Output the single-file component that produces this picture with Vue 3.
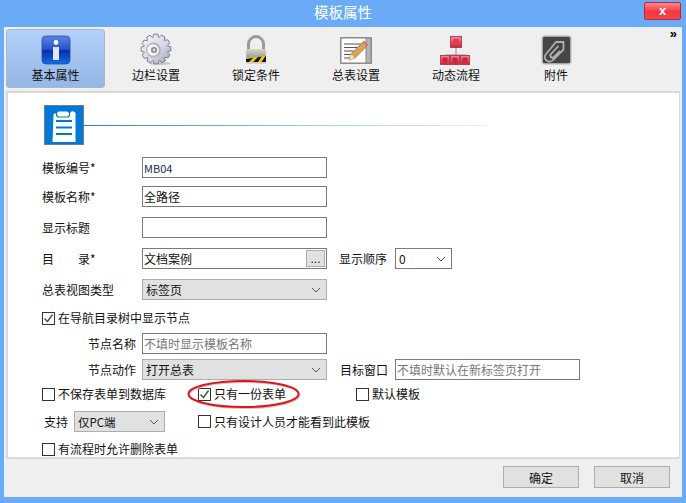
<script setup>
const tabs = [
  { key: 'info', label: '基本属性', active: true },
  { key: 'gear', label: '边栏设置' },
  { key: 'lock', label: '锁定条件' },
  { key: 'sheet', label: '总表设置' },
  { key: 'flow', label: '动态流程' },
  { key: 'clip', label: '附件' },
]
function gearPath(cx, cy, ro, ri, n) {
  const pts = []
  const step = (Math.PI * 2) / n
  for (let i = 0; i < n; i++) {
    const a = i * step
    const seq = [[-0.5, ri], [-0.28, ro], [0.22, ro], [0.44, ri]]
    for (const [o, r] of seq) {
      const t = a + o * step
      pts.push(`${(cx + r * Math.cos(t)).toFixed(2)} ${(cy + r * Math.sin(t)).toFixed(2)}`)
    }
  }
  return 'M' + pts.join('L') + 'Z'
}
const gear = gearPath(18, 14, 15, 12, 12)
</script>

<template>
  <div class="window">
    <header class="titlebar">
      <span></span>
      <span class="title">模板属性</span>
      <button class="close" type="button">x</button>
    </header>
    <div class="client">
      <nav class="toolbar">
        <div v-for="t in tabs" :key="t.key" class="tab" :class="{ active: t.active }">
          <svg class="ico" width="36" height="32" viewBox="0 0 36 32">
            <defs>
              <linearGradient id="infoG" x1="0" y1="0" x2="0" y2="1">
                <stop offset="0" stop-color="#5c86e6" />
                <stop offset=".48" stop-color="#2a50c8" />
                <stop offset=".52" stop-color="#0a2cb0" />
                <stop offset="1" stop-color="#0f6fe6" />
              </linearGradient>
              <linearGradient id="gearG" x1="0" y1="0" x2="1" y2="1">
                <stop offset="0" stop-color="#f6f6fc" />
                <stop offset=".55" stop-color="#d8d9e6" />
                <stop offset="1" stop-color="#9a9bb2" />
              </linearGradient>
              <linearGradient id="lockG" x1="0" y1="0" x2="0" y2="1">
                <stop offset="0" stop-color="#d8d8c8" />
                <stop offset=".5" stop-color="#a8a89c" />
                <stop offset="1" stop-color="#d8d8d0" />
              </linearGradient>
              <linearGradient id="redG" x1="0" y1="0" x2="0" y2="1">
                <stop offset="0" stop-color="#f0909c" />
                <stop offset="1" stop-color="#c81e3c" />
              </linearGradient>
            </defs>
            <g v-if="t.key === 'info'">
              <rect x="4" y="1" width="28" height="28" rx="4" fill="url(#infoG)" stroke="#2a4a9a" stroke-width=".8" />
              <circle cx="18" cy="7.500" r="2.400" fill="#fff" />
              <path d="M15 12h6v13h-6z" fill="#dfe6f2" />
            </g>
            <g v-else-if="t.key === 'gear'">
              <ellipse cx="22" cy="28.500" rx="11" ry="1.500" fill="#c4c4c4" />
              <path :d="gear" fill="url(#gearG)" stroke="#7c7d98" stroke-width="1" stroke-linejoin="round" />
              <circle cx="15.500" cy="15" r="7.500" fill="#b4b4c0" />
              <circle cx="15" cy="15" r="5.800" fill="#f6f6f6" />
              <circle cx="16" cy="15" r="3" fill="#84848c" />
              <circle cx="16" cy="15" r="1.400" fill="#e4e4e4" />
            </g>
            <g v-else-if="t.key === 'lock'">
              <path d="M10.500 14V9a7.500 7.500 0 0 1 15 0v5" fill="none" stroke="#9a9a9a" stroke-width="3" />
              <rect x="8" y="14" width="20" height="15" rx="1.500" fill="url(#lockG)" />
              <path d="M8 24l20-3v6H8z" fill="#141414" />
              <path d="M11 27l5-5h4l-5 5zM20 27l4-6h3.500l-4 6z" fill="#e8c81e" />
            </g>
            <g v-else-if="t.key === 'sheet'">
              <rect x="2" y="2" width="32" height="27" fill="#8b8b8b" rx="1" />
              <rect x="3.500" y="3.500" width="24" height="24" fill="#fbfbfb" />
              <rect x="28.500" y="3.500" width="4" height="24" fill="#b4b4b4" />
              <path d="M6 9h18M6 12.500h16M6 16h12M6 19.500h9M6 23h7" stroke="#555" stroke-width="1" />
              <path d="M11 25l2-6L26 6l4 4-13 13z" fill="#d9a35a" stroke="#8a6a3a" stroke-width=".6" />
              <path d="M11 25l2-6 4 4z" fill="#f3dcb4" />
              <path d="M24.500 7.500l1.500-1.500 4 4-1.500 1.500z" fill="#d8708c" />
            </g>
            <g v-else-if="t.key === 'flow'">
              <path d="M18 12v10M8 24v-4h20v4" fill="none" stroke="#8c8c8c" stroke-width="1" />
              <rect x="12.500" y="1.500" width="11" height="11" fill="url(#redG)" stroke="#b8404c" />
              <rect x="15" y="4" width="6" height="6" fill="#e23a52" />
              <g v-for="x in [2.500, 12.500, 22.500]" :key="x">
                <rect :x="x" y="20.500" width="9" height="9" fill="url(#redG)" stroke="#b8404c" />
                <rect :x="x + 2" y="22.500" width="5" height="5" fill="#d8203c" />
              </g>
            </g>
            <g v-else>
              <rect x="4" y="1" width="29" height="28" rx="2.500" fill="#454545" stroke="#c8c8c8" stroke-width="1.500" />
              <path d="M18 7h7.500v7.500L15 25a4.500 4.500 0 0 1-7-6zM20.500 11L13 19a2 2 0 0 0 3 3l6-6" fill="none" stroke="#b0b0b0" stroke-width="1.800" stroke-linejoin="round" />
            </g>
          </svg>
          <span class="tab-label">{{ t.label }}</span>
        </div>
        <span class="more">»</span>
      </nav>

      <main class="panel">
        <div class="head">
          <div class="head-icon">
            <svg width="38" height="38" viewBox="0 0 38 38">
              <path d="M10 9a1.500 1.500 0 0 1 1.500-1.500H15V7h10v.5h1.500A1.500 1.500 0 0 1 32 9v27H9z" transform="translate(-1.500 0)" fill="#fff" />
              <rect x="11.500" y="5" width="13" height="6" rx="2.500" fill="#fff" stroke="#0078d7" stroke-width="1.200" />
              <path d="M11 15h16M11 21.500h16M11 28h16" stroke="#0078d7" stroke-width="2" />
            </svg>
          </div>
          <div class="head-line"></div>
        </div>

        <div class="form">
          <div class="row r1">
            <span class="label">模板编号*</span>
            <input class="input latin" value="MB04" />
          </div>
          <div class="row r2">
            <span class="label">模板名称*</span>
            <input class="input" value="全路径" />
          </div>
          <div class="row r3">
            <span class="label">显示标题</span>
            <input class="input" value="" />
          </div>
          <div class="row r3">
            <span class="label spaced"><span>目</span><span>录*</span></span>
            <div class="input picker">
              <span>文档案例</span>
              <button class="dots" type="button">...</button>
            </div>
            <span class="label order">显示顺序</span>
            <div class="select small"><span>0</span><svg class="chev" width="10" height="6" viewBox="0 0 10 6"><path d="M1 1l4 4 4-4" fill="none" stroke="#555" /></svg></div>
          </div>
          <div class="row r3">
            <span class="label">总表视图类型</span>
            <div class="select wide"><span>标签页</span><svg class="chev" width="10" height="6" viewBox="0 0 10 6"><path d="M1 1l4 4 4-4" fill="none" stroke="#555" /></svg></div>
          </div>
          <label class="check navcheck">
            <span class="box"><svg width="11" height="11" viewBox="0 0 11 11"><path d="M1.500 5.500l3 3 5-7" fill="none" stroke="#555" stroke-width="1.500" /></svg></span>在导航目录树中显示节点
          </label>
          <div class="row sub first">
            <span class="label indent">节点名称</span>
            <input class="input" placeholder="不填时显示模板名称" />
          </div>
          <div class="row sub">
            <span class="label indent">节点动作</span>
            <div class="select wide"><span>打开总表</span><svg class="chev" width="10" height="6" viewBox="0 0 10 6"><path d="M1 1l4 4 4-4" fill="none" stroke="#555" /></svg></div>
            <span class="label target">目标窗口</span>
            <input class="input" placeholder="不填时默认在新标签页打开" />
          </div>
          <div class="opts one">
            <label class="check"><span class="box"></span>不保存表单到数据库</label>
            <label class="check"><span class="box"><svg width="11" height="11" viewBox="0 0 11 11"><path d="M1.500 5.500l3 3 5-7" fill="none" stroke="#555" stroke-width="1.500" /></svg></span>只有一份表单</label>
            <label class="check"><span class="box"></span>默认模板</label>
          </div>
          <div class="opts two">
            <div class="support">
              <span class="support-label">支持</span>
              <div class="select mid"><span>仅PC端</span><svg class="chev" width="10" height="6" viewBox="0 0 10 6"><path d="M1 1l4 4 4-4" fill="none" stroke="#555" /></svg></div>
            </div>
            <label class="check wideopt"><span class="box"></span>只有设计人员才能看到此模板</label>
          </div>
          <label class="check lastcheck"><span class="box"></span>有流程时允许删除表单</label>
        </div>

        <svg class="ring" width="116" height="32" viewBox="0 0 116 32">
          <ellipse cx="57.500" cy="16" rx="55" ry="13" fill="none" stroke="#c8c8c8" stroke-width="2" />
          <ellipse cx="56.500" cy="15" rx="55" ry="13" fill="none" stroke="#e3121c" stroke-width="2" />
        </svg>
      </main>

      <footer class="footer">
        <button class="btn" type="button">确定</button>
        <button class="btn" type="button">取消</button>
      </footer>
    </div>
  </div>
</template>

<style scoped>
.window {
  width: 686px;
  height: 503px;
  background: #6aabf7;
  display: flex;
  flex-direction: column;
  font-family: "Noto Sans CJK SC", "Liberation Sans", sans-serif;
  font-size: 12px;
  color: #111;
  overflow: hidden;
}
.titlebar {
  height: 27px;
  flex: none;
  display: grid;
  grid-template-columns: 1fr auto 1fr;
  align-items: start;
}
.title {
  color: #fff;
  font-size: 14.500px;
  line-height: 24px;
}
.close {
  justify-self: end;
  width: 37px;
  height: 18px;
  margin: 2px 5px 0 0;
  padding: 0;
  border: 1px solid #c8202c;
  border-radius: 2px;
  background: linear-gradient(#ff8a8e, #f5353d 55%, #ee4a50);
  color: #fff;
  font: bold 13px/14px "Liberation Sans", sans-serif;
}
.client {
  flex: none;
  height: 470px;
  margin: 0 4px;
  background: #efefef;
  display: flex;
  flex-direction: column;
}
.toolbar {
  height: 64px;
  flex: none;
  display: flex;
  padding: 2px 0 0 2px;
  box-sizing: border-box;
  position: relative;
}
.tab {
  width: 100px;
  height: 59px;
  box-sizing: border-box;
  display: flex;
  flex-direction: column;
  align-items: center;
  padding-top: 6px;
}
.tab.active {
  width: 99px;
  margin-right: 1px;
  background: linear-gradient(#b4d0fa, #94b7e6);
  border: 1px solid #a8b8cc;
  border-radius: 3px;
  padding-top: 5px;
}
.ico {
  flex: none;
  overflow: visible;
}
.tab-label {
  margin-top: 1px;
  line-height: 14px;
  font-size: 12px;
}
.more {
  position: absolute;
  right: 5px;
  top: 0;
  font: bold 13px/14px "Liberation Sans", sans-serif;
  color: #000;
}
.panel {
  width: 674px;
  height: 368px;
  margin-left: 2px;
  flex: none;
  box-sizing: border-box;
  border: 2px solid #d9d9d9;
  border-right-width: 1px;
  background: #fff;
  padding: 12px 0 0 36px;
  position: relative;
}
.head {
  display: flex;
  align-items: center;
  height: 40px;
}
.head-icon {
  width: 40px;
  height: 40px;
  box-sizing: border-box;
  background: #0078d7;
  border: 1px solid #6c7f90;
  display: flex;
  align-items: center;
  justify-content: center;
}
.head-line {
  width: 403px;
  height: 1px;
  background: linear-gradient(90deg, #2f80c8, #a8cfe4 60%, #eeeeee);
}
.form {
  margin-left: -2px;
  margin-top: 12px;
}
.row {
  display: flex;
  align-items: center;
  height: 21px;
}
.r2 {
  margin-top: 8px;
}
.r3 {
  margin-top: 10px;
}
.label {
  width: 100px;
  flex: none;
  line-height: 21px;
}
.spaced {
  display: flex;
  gap: 24px;
}
.input {
  width: 185px;
  height: 21px;
  box-sizing: border-box;
  border: 1px solid #7a7a7a;
  background: #fff;
  padding: 0 1px;
  margin: 0;
  font: inherit;
  color: #111;
  outline: none;
}
.latin {
  font-size: 11px;
  color: #1a2a4a;
}
.input::placeholder {
  color: #777;
  opacity: 1;
}
.picker {
  display: flex;
  align-items: center;
  justify-content: space-between;
  padding-right: 1px;
}
.dots {
  width: 19px;
  height: 17px;
  padding: 0;
  border: 1px solid #adadad;
  background: #e1e1e1;
  font: 12px/12px "Liberation Sans", sans-serif;
  color: #111;
}
.order {
  width: auto;
  margin-left: 12px;
  margin-right: 8px;
}
.select {
  height: 21px;
  box-sizing: border-box;
  border: 1px solid #adadad;
  background: #e1e1e1;
  display: flex;
  align-items: center;
  justify-content: space-between;
  padding: 0 5px 0 3px;
}
.small {
  width: 57px;
  background: #fff;
  border-color: #7a7a7a;
}
.wide {
  width: 185px;
}
.mid {
  width: 91px;
  font-size: 11.500px;
}
.check {
  display: flex;
  align-items: center;
  gap: 3px;
  height: 20px;
  line-height: 20px;
  white-space: nowrap;
}
.box {
  width: 13px;
  height: 13px;
  box-sizing: border-box;
  border: 1px solid #333;
  background: #fff;
  display: flex;
  align-items: center;
  justify-content: center;
  flex: none;
}
.navcheck {
  margin-top: 8px;
}
.first {
  margin-top: 5px;
}
.sub + .sub {
  margin-top: 5px;
}
.indent {
  padding-left: 46px;
  box-sizing: border-box;
}
.target {
  width: auto;
  margin-left: 13px;
  margin-right: 7px;
}
.opts {
  display: grid;
  grid-template-columns: 156px 158px auto;
  align-items: center;
}
.one {
  margin-top: 4px;
}
.two {
  margin-top: 7px;
  height: 21px;
}
.wideopt {
  grid-column: 2 / 4;
}
.support {
  display: flex;
  align-items: center;
}
.support-label {
  margin-left: 2px;
  width: 30px;
}
.lastcheck {
  margin-top: 7px;
}
.ring {
  position: absolute;
  left: 179px;
  top: 286px;
}
.footer {
  flex: 1;
  display: flex;
  justify-content: flex-end;
  align-items: center;
  gap: 15px;
  padding: 0 12px 2px 0;
}
.btn {
  width: 76px;
  height: 22px;
  padding: 0;
  border: 1px solid #adadad;
  background: #e1e1e1;
  font: inherit;
  color: #111;
}
</style>
